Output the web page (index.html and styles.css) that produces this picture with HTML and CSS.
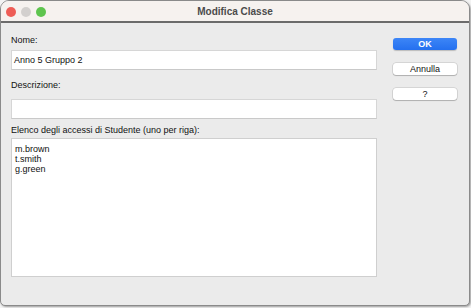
FILE: index.html
```html
<!DOCTYPE html>
<html lang="it">
<head>
<meta charset="utf-8">
<title>Modifica Classe</title>
<link rel="stylesheet" href="styles.css">
</head>
<body>
<div class="window">
  <div class="titlebar">
    <div class="lights">
      <span class="light red"></span>
      <span class="light gray"></span>
      <span class="light green"></span>
    </div>
    <div class="title">Modifica Classe</div>
  </div>
  <div class="content">
    <div class="form">
      <label class="label label-nome">Nome:</label>
      <div class="field field-nome">Anno 5 Gruppo 2</div>
      <label class="label label-desc">Descrizione:</label>
      <div class="field field-desc"></div>
      <label class="label label-list">Elenco degli accessi di Studente (uno per riga):</label>
      <div class="area">
        <div class="line">m.brown</div>
        <div class="line">t.smith</div>
        <div class="line">g.green</div>
      </div>
    </div>
    <div class="actions">
      <button class="btn btn-primary">OK</button>
      <button class="btn">Annulla</button>
      <button class="btn">?</button>
    </div>
  </div>
</div>
</body>
</html>
```

FILE: styles.css
```css
* { box-sizing: border-box; }
html, body {
  margin: 0;
  padding: 0;
  background: #f3f3f3;
}
body {
  width: 471px;
  height: 308px;
  font-family: "Liberation Sans", Arial, sans-serif;
  font-size: 9px;
  color: #111;
}
.window {
  width: 470px;
  height: 306px;
  background: #ebebeb;
  border: 1px solid #8a8a8a;
  border-radius: 9px 9px 5px 5px;
  box-shadow: 1px 1px 2px rgba(0,0,0,0.35);
  overflow: hidden;
  display: flex;
  flex-direction: column;
}
.titlebar {
  height: 22px;
  flex: none;
  background: #f6f2ef;
  border-bottom: 2px solid #6b6b6b;
  display: flex;
  align-items: center;
  padding-left: 5px;
  position: relative;
}
.lights {
  display: flex;
  gap: 5px;
  margin-top: 2px;
}
.light {
  width: 10px;
  height: 10px;
  border-radius: 50%;
  display: block;
}
.red { background: #ee5d56; }
.gray { background: #d3d0ce; }
.green { background: #5ec44e; }
.title {
  position: absolute;
  left: 0;
  right: 0;
  top: 4px;
  text-align: center;
  font-size: 10px;
  font-weight: bold;
  color: #4b4b4b;
  line-height: 14px;
}
.content {
  display: flex;
  padding: 12px 0 0 10px;
}
.form {
  width: 366px;
  flex: none;
  display: flex;
  flex-direction: column;
}
.label {
  display: block;
  line-height: 11px;
  height: 11px;
}
.label-desc { margin-top: 10px; }
.label-list { margin-top: 6px; }
.field {
  height: 20px;
  background: #fff;
  border: 1px solid #d6d6d6;
  border-bottom-color: #c9c9c9;
  padding: 2px 0 0 2px;
  line-height: 14px;
}
.field-nome { margin-top: 4px; }
.field-desc { margin-top: 8px; }
.area {
  margin-top: 2px;
  height: 139px;
  background: #fff;
  border: 1px solid #cfcfcf;
  padding: 5px 0 0 3px;
}
.line {
  line-height: 10px;
  height: 10px;
}
.actions {
  margin-left: 16px;
  padding-top: 3px;
  display: flex;
  flex-direction: column;
  gap: 13px;
}
.btn {
  width: 64px;
  height: 12px;
  padding: 0;
  margin: 0;
  border: none;
  border-radius: 3px;
  background: #fff;
  box-shadow: 0 0 0 0.5px rgba(0,0,0,0.18), 0 1px 1px rgba(0,0,0,0.18);
  font-family: "Liberation Sans", Arial, sans-serif;
  font-size: 9px;
  line-height: 12px;
  color: #111;
}
.btn-primary {
  background: linear-gradient(#3d86f7, #2470ef);
  color: #fff;
  font-weight: bold;
  box-shadow: 0 1px 1px rgba(0,0,0,0.2);
}
```
